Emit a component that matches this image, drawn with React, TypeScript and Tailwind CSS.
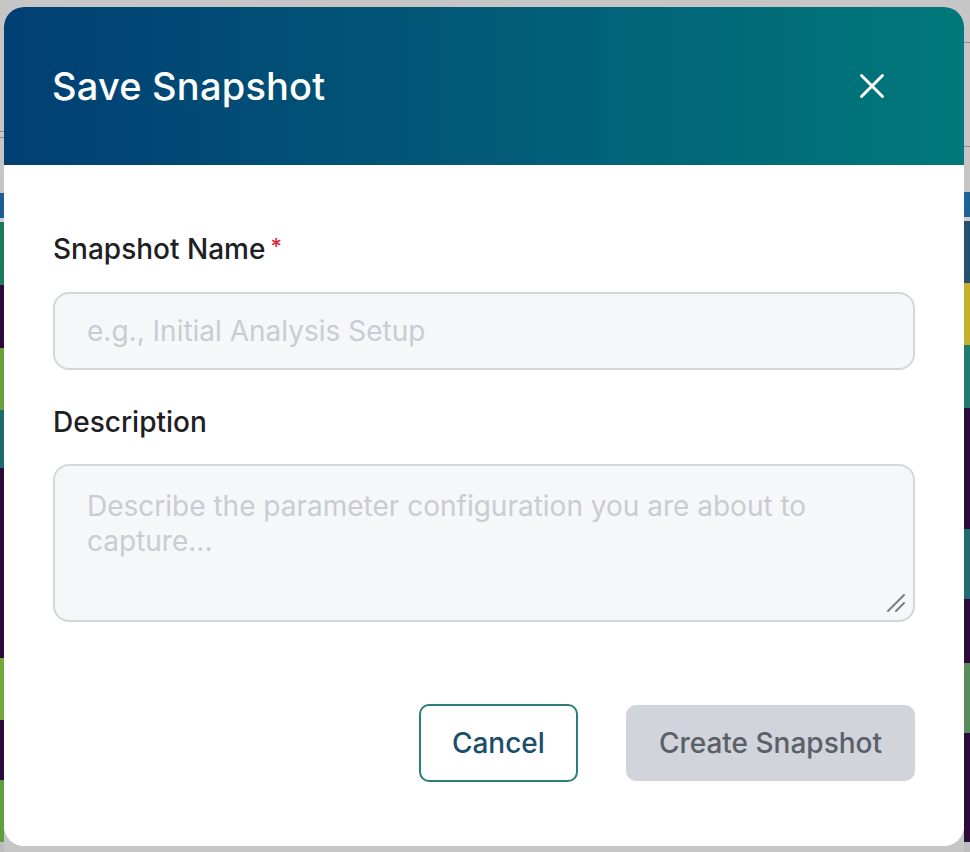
import React from "react";

const leftStrip: [number, string][] = [
  [131, "#c6c6c6"],
  [1, "#8a8a8a"],
  [5, "#c6c6c6"],
  [1, "#8a8a8a"],
  [55, "#c6c6c6"],
  [25, "#1f5c91"],
  [4, "#cfcfcf"],
  [63, "#1d7a5e"],
  [63, "#2c0b3b"],
  [62, "#6aa13a"],
  [58, "#1b6c70"],
  [190, "#2c0b3b"],
  [62, "#74a83a"],
  [60, "#2c0b3b"],
  [62, "#5e9e3e"],
  [10, "#bdbdbd"],
];

const rightStrip: [number, string][] = [
  [42, "#c6c6c6"],
  [1, "#8a8a8a"],
  [104, "#c6c6c6"],
  [1, "#8a8a8a"],
  [45, "#c6c6c6"],
  [25, "#1e6496"],
  [4, "#cfcfcf"],
  [63, "#27506f"],
  [62, "#c3b12b"],
  [63, "#217a6c"],
  [122, "#2c0b3b"],
  [71, "#226b73"],
  [64, "#2c0b3b"],
  [70, "#5d8a5c"],
  [110, "#2c0b3b"],
  [10, "#bdbdbd"],
];

function Strip({ items, width }: { items: [number, string][]; width: string }) {
  return (
    <div className={`flex flex-col ${width}`}>
      {items.map(([h, c], i) => (
        <div key={i} style={{ height: h, backgroundColor: c }} />
      ))}
    </div>
  );
}

export default function App() {
  return (
    <div
      className="relative h-[852px] w-[970px] overflow-hidden bg-[#c6c6c6]"
      style={{ fontFamily: "Inter, 'Noto Sans', sans-serif" }}
    >
      {/* page behind the dialog */}
      <div className="flex h-full w-full">
        <Strip items={leftStrip} width="w-[4px]" />
        <div className="flex-1 bg-[#c6c6c6]" />
        <Strip items={rightStrip} width="w-[6px]" />
      </div>

      {/* dialog */}
      <div className="absolute left-[4px] top-[7px] flex h-[839px] w-[960px] flex-col overflow-hidden rounded-[20px] bg-white">
        <div className="flex h-[158px] items-center justify-between bg-gradient-to-r from-[#013f73] via-[#035a78] to-[#00797a] pl-[48px] pr-[79px]">
          <h2 className="text-[38px] font-medium leading-[46px] tracking-[0.2px] text-white">
            Save Snapshot
          </h2>
          <button className="flex h-[26px] w-[26px] items-center justify-center">
            <svg width="26" height="26" viewBox="0 0 26 26" fill="none">
              <path
                d="M2.5 2.5 L23.5 23.5 M23.5 2.5 L2.5 23.5"
                stroke="white"
                strokeWidth="3"
                strokeLinecap="round"
              />
            </svg>
          </button>
        </div>

        <div className="flex flex-col px-[49px] pt-[67px]">
          <label className="mb-[26px] flex items-start text-[28px] font-medium leading-[34px] text-[#1e2024]">
            Snapshot Name
            <span className="ml-[5px] text-[22px] leading-[28px] text-[#d7263d]">*</span>
          </label>
          <input
            placeholder="e.g., Initial Analysis Setup"
            className="h-[78px] w-full rounded-[16px] border-2 border-[#d3d6db] bg-[#f6f7f8] px-[32px] text-[28px] text-[#1e2024] outline-none placeholder:text-[#c9ccd2]"
          />

          <label className="mb-[25px] mt-[35px] text-[28px] font-medium leading-[34px] text-[#1e2024]">
            Description
          </label>
          <div className="relative">
            <textarea
              placeholder="Describe the parameter configuration you are about to capture..."
              className="block h-[158px] w-full resize-none rounded-[16px] border-2 border-[#d3d6db] bg-[#f6f7f8] px-[32px] pt-[23px] text-[28px] leading-[35px] text-[#1e2024] outline-none placeholder:text-[#c9ccd2]"
            />
            <svg
              className="pointer-events-none absolute bottom-[9px] right-[9px]"
              width="20"
              height="20"
              viewBox="0 0 20 20"
              fill="none"
            >
              <path
                d="M18 2 L2 18 M18 10 L10 18"
                stroke="#7b7e83"
                strokeWidth="2"
                strokeLinecap="round"
              />
            </svg>
          </div>

          <div className="mt-[82px] flex items-center justify-end gap-[48px]">
            <button className="h-[78px] rounded-[10px] border-2 border-[#2b7d79] px-[31px] text-[28px] font-medium text-[#1b4e6c]">
              Cancel
            </button>
            <button className="h-[76px] rounded-[10px] bg-[#d1d4da] px-[33px] text-[28px] font-medium text-[#5b6068]">
              Create Snapshot
            </button>
          </div>
        </div>
      </div>
    </div>
  );
}
